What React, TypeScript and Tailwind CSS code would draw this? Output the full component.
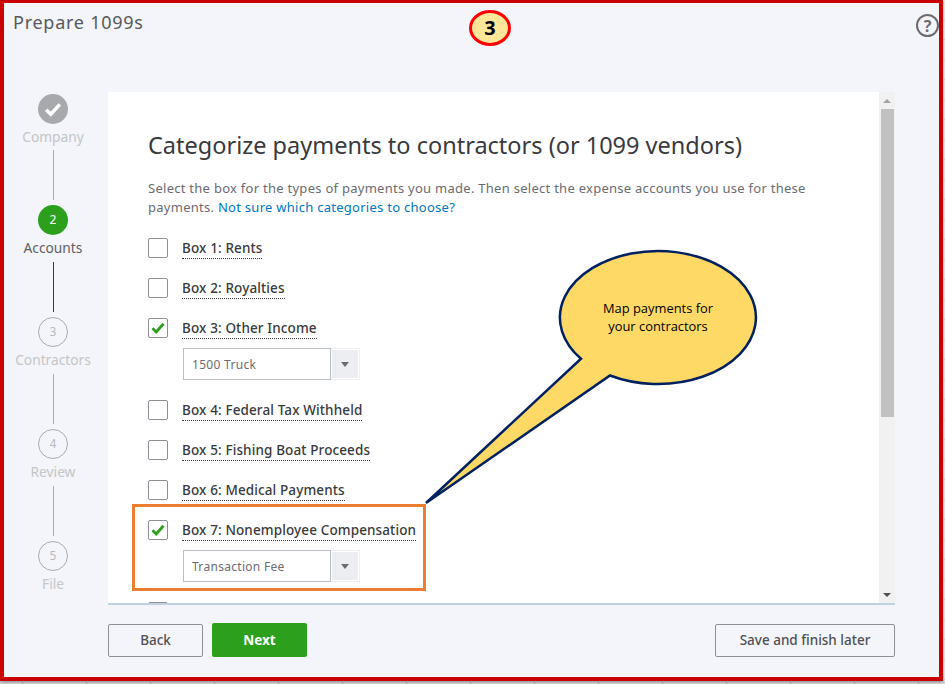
import React from "react";

const font = { sans: "font-['Noto_Sans',sans-serif]" };

function Check({ className }: { className?: string }) {
  return (
    <svg className={className} width="14" height="12" viewBox="0 0 14 12" fill="none">
      <path d="M1.5 6.2L5.2 10L12.5 1.8" stroke="#2ca01c" strokeWidth="2.8" />
    </svg>
  );
}

function Step({ n, label, state, line }: { n: number; label: string; state: "done" | "active" | "todo"; line?: "light" | "dark" }) {
  return (
    <div className="flex flex-col items-center">
      {state === "done" && (
        <div className="w-[30px] h-[30px] rounded-full bg-[#a8a9ac] flex items-center justify-center">
          <svg width="18" height="15" viewBox="0 0 18 15" fill="none">
            <path d="M2.2 7.8L6.8 12.2L15.8 2.4" stroke="#fff" strokeWidth="3.6" />
          </svg>
        </div>
      )}
      {state === "active" && (
        <div className="w-[30px] h-[30px] rounded-full bg-[#2ca01c] flex items-center justify-center text-[12px] text-white">{n}</div>
      )}
      {state === "todo" && (
        <div className="w-[30px] h-[30px] rounded-full border border-[#a9aaad] flex items-center justify-center text-[12px] text-[#b9babd]">{n}</div>
      )}
      <div className={`text-[13.75px] ${state === "done" ? "h-[26px] leading-[25px]" : "h-[27px] leading-[26px]"} ${state === "active" ? "text-[#5f6063]" : "text-[#c4c5c8]"}`}>{label}</div>
      {line ? (
        <div className={`w-px h-[50px] mb-[5px] ${line === "dark" ? "bg-[#393a3d]" : "bg-[#a9aaad]"}`} />
      ) : null}
    </div>
  );
}

function Box({ checked }: { checked?: boolean }) {
  return (
    <div className="w-5 h-5 rounded-[2px] border border-[#8d9096] bg-white flex items-center justify-center shrink-0">
      {checked && <Check />}
    </div>
  );
}

function Row({ label, checked, select }: { label: string; checked?: boolean; select?: string }) {
  return (
    <div className="flex flex-col">
      <div className="flex items-center h-5">
        <Box checked={checked} />
        <span className="ml-[14px] text-[13.5px] leading-[20px] tracking-[0.12px] font-medium text-[#393a3d] border-b border-dotted border-[#393a3d] whitespace-nowrap">
          {label}
        </span>
      </div>
      {select && (
        <div className="flex ml-[35px] mt-[10px] h-8 w-[177px]">
          <div className="w-[148px] border border-[#babec5] bg-white text-[12px] leading-[32px] tracking-[0.3px] pl-2 text-[#6b6c72] whitespace-nowrap">{select}</div>
          <div className="w-[29px] border border-l-0 border-[#eceef1] p-[1px] bg-white">
            <div className="w-full h-full bg-[#eceef1] flex items-center justify-center">
              <div className="w-0 h-0 border-l-[4px] border-r-[4px] border-t-[5px] border-l-transparent border-r-transparent border-t-[#6b6c72]" />
            </div>
          </div>
        </div>
      )}
    </div>
  );
}

export default function App() {
  return (
    <div className={`relative w-[945px] h-[684px] overflow-hidden bg-[#f4f4f4] ${font.sans}`}>
      <div className="flex">
        <div className="w-[943px] h-[681px] border-l-4 border-t-[3px] border-r-4 border-b-4 border-[#c80000] bg-[#f3f5fa] flex flex-col shadow-[0_1px_3px_rgba(0,0,0,0.4)]">
          {/* Header */}
          <div className="h-[89px] shrink-0 flex justify-between">
            <div className="ml-[9px] mt-[6px] text-[18px] leading-[26px] tracking-[0.75px] text-[#58595c]">Prepare 1099s</div>
            <svg className="mt-[11px]" width="23" height="23" viewBox="0 0 23 23" fill="none">
              <circle cx="11.5" cy="11.5" r="10.5" stroke="#6b6c72" strokeWidth="2" />
              <text x="11.5" y="17.5" textAnchor="middle" fontSize="16" fontWeight="700" fill="#6b6c72">?</text>
            </svg>
          </div>

          <div className="flex flex-1">
            {/* Stepper */}
            <div className="w-[104px] shrink-0 pr-[6px] pt-[2px]">
              <Step n={1} label="Company" state="done" line="light" />
              <Step n={2} label="Accounts" state="active" line="dark" />
              <Step n={3} label="Contractors" state="todo" line="light" />
              <Step n={4} label="Review" state="todo" line="light" />
              <Step n={5} label="File" state="todo" />
            </div>

            {/* Main column */}
            <div className="w-[787px] flex flex-col">
              <div className="h-[513px] flex bg-white border-b-2 border-[#bfd0e4]">
                <div className="flex-1 overflow-hidden pl-10 pt-[38px]">
                  <h1 className="text-[23.5px] leading-[30px] text-[#393a3d] whitespace-nowrap">
                    Categorize payments to contractors (or 1099 vendors)
                  </h1>
                  <p className="mt-[19px] w-[668px] text-[13px] leading-[19px] tracking-[0.27px] text-[#6b6c72]">
                    Select the box for the types of payments you made. Then select the expense accounts you use for these payments.{" "}
                    <span className="text-[#0077c5]">Not sure which categories to choose?</span>
                  </p>
                  <div className="mt-[21px] flex flex-col gap-5">
                    <Row label="Box 1: Rents" />
                    <Row label="Box 2: Royalties" />
                    <Row label="Box 3: Other Income" checked select="1500 Truck" />
                    <Row label="Box 4: Federal Tax Withheld" />
                    <Row label="Box 5: Fishing Boat Proceeds" />
                    <Row label="Box 6: Medical Payments" />
                    <Row label="Box 7: Nonemployee Compensation" checked select="Transaction Fee" />
                    <Box />
                  </div>
                </div>
                {/* Scrollbar */}
                <div className="w-4 shrink-0 bg-[#f1f1f1] flex flex-col items-center">
                  <div className="h-[17px] flex items-center justify-center">
                    <div className="w-0 h-0 border-l-[4px] border-r-[4px] border-b-[4px] border-l-transparent border-r-transparent border-b-[#a3a3a3]" />
                  </div>
                  <div className="w-[13px] h-[308px] bg-[#c1c1c1]" />
                  <div className="flex-1 flex items-end pb-[6px]">
                    <div className="w-0 h-0 border-l-[4px] border-r-[4px] border-t-[4px] border-l-transparent border-r-transparent border-t-[#505050]" />
                  </div>
                </div>
              </div>

              {/* Footer */}
              <div className="mt-[18px] h-[34px] flex items-center">
                <button className="w-[95px] h-[33px] rounded-[2px] border border-[#8d9096] text-[13.5px] font-medium text-[#4f5055]">Back</button>
                <button className="ml-[9px] w-[95px] h-[34px] rounded-[2px] bg-[#2ca01c] text-[13.5px] font-bold text-white">Next</button>
                <button className="ml-auto w-[180px] h-[33px] rounded-[2px] border border-[#8d9096] text-[13.5px] font-medium text-[#4f5055]">Save and finish later</button>
              </div>
            </div>
          </div>
        </div>

        {/* Sheet behind the frame */}
        <div className="w-[2px] h-[681px] flex flex-col">
          {Array.from({ length: 34 }).map((_, i) => (
            <div key={i} className="h-5 shrink-0 border-b border-[#c8c8c8]" />
          ))}
        </div>
      </div>
      <div className="flex h-[3px] pl-[22px] bg-[#d8d8d8]">
        {Array.from({ length: 15 }).map((_, i) => (
          <div key={i} className="w-16 shrink-0 border-l border-[#9a9a9a]" />
        ))}
      </div>

      {/* Annotations laid over the screenshot */}
      <div className="absolute left-[469px] top-[10px] w-[42px] h-[36px] rounded-[50%] border-[3px] border-[#ff0000] bg-[#ffe699] flex items-center justify-center text-[20px] font-bold text-black">
        3
      </div>
      <div className="absolute left-[132px] top-[504px] w-[294px] h-[87px] border-[3px] border-[#ed7d31]" />
      <svg className="absolute left-[420px] top-[245px]" width="345" height="265" viewBox="0 0 345 265" fill="none">
        <path
          d="M6 258L161 113.7A98 66.5 0 1 1 190 130.5Z"
          fill="#ffd966"
          stroke="#002060"
          strokeWidth="2.5"
          strokeLinejoin="miter"
        />
      </svg>
      <div className="absolute left-[578px] top-[299px] w-[160px] text-center text-[12.9px] leading-[18px] text-black font-['Open_Sans',sans-serif]">
        Map payments for
        <br />
        your contractors
      </div>
    </div>
  );
}
